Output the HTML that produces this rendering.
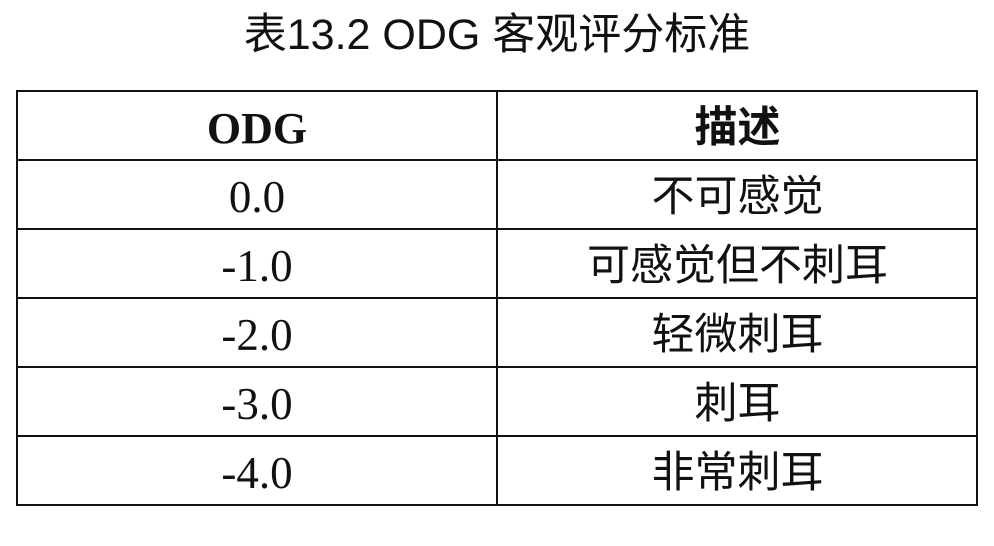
<html><head><style>
body{margin:0;width:994px;height:546px;background:#fff;position:relative;overflow:hidden}
.t{position:absolute;left:0;width:994px;top:0px;text-align:center;font:43px "Liberation Sans","Noto Sans CJK SC",sans-serif;color:#111}
.h{position:absolute;background:#111;height:2px;left:16px;width:962px}
.v{position:absolute;background:#111;width:2px;top:91px;height:415px}
.c{position:absolute;height:69px;line-height:69px;text-align:center;font-size:45px;color:#111}
.a{left:17px;width:480px;font-family:"Liberation Serif",serif}
.b{left:498px;width:479px;font-family:"Liberation Serif","Noto Sans CJK SC",sans-serif;font-size:43px}
</style></head><body>
<div class="t">表13.2 ODG 客观评分标准</div>
<div class="h" style="top:90px"></div><div class="h" style="top:159px"></div><div class="h" style="top:228px"></div><div class="h" style="top:297px"></div><div class="h" style="top:366px"></div><div class="h" style="top:435px"></div><div class="h" style="top:504px"></div>
<div class="v" style="left:16px"></div><div class="v" style="left:496px"></div><div class="v" style="left:976px"></div>
<div class="c a" style="top:94px;font-weight:bold;font-size:44px">ODG</div><div class="c b" style="top:94px;font-weight:bold">描述</div>
<div class="c a" style="top:163px">0.0</div><div class="c b" style="top:163px">不可感觉</div>
<div class="c a" style="top:232px">-1.0</div><div class="c b" style="top:232px">可感觉但不刺耳</div>
<div class="c a" style="top:301px">-2.0</div><div class="c b" style="top:301px">轻微刺耳</div>
<div class="c a" style="top:370px">-3.0</div><div class="c b" style="top:370px">刺耳</div>
<div class="c a" style="top:439px">-4.0</div><div class="c b" style="top:439px">非常刺耳</div>
</body></html>
